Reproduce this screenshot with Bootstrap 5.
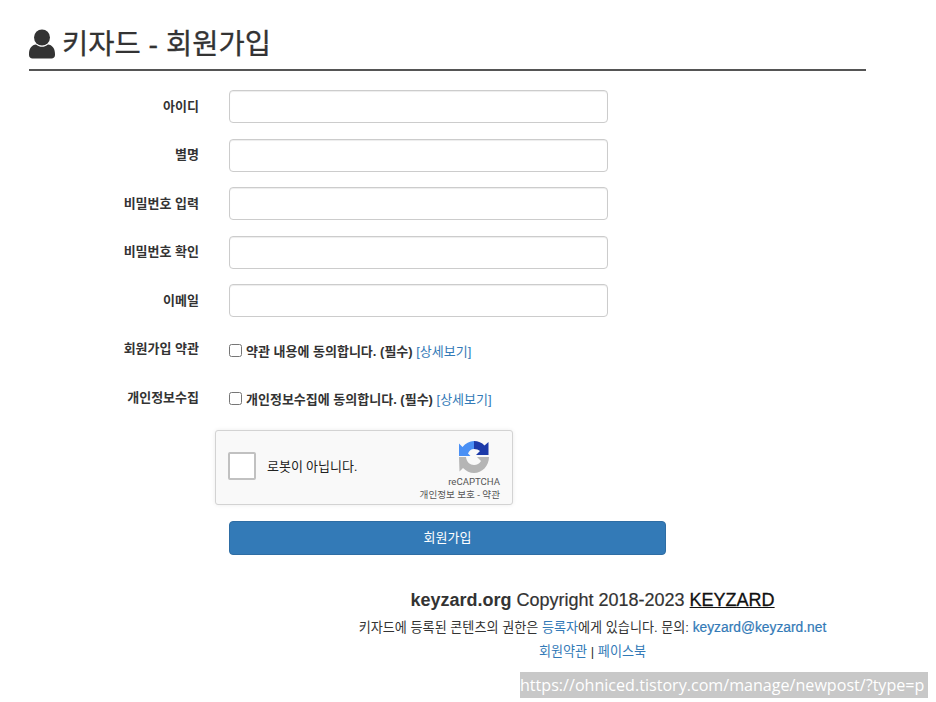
<!DOCTYPE html>
<html lang="ko">
<head>
    <meta charset="UTF-8">
    <meta name="viewport" content="width=device-width, initial-scale=1.0">
    <title>키자드 - 회원가입</title>
    <link href="https://cdn.jsdelivr.net/npm/bootstrap@5.3.3/dist/css/bootstrap.min.css" rel="stylesheet">
    <script src="https://cdn.jsdelivr.net/npm/bootstrap@5.3.3/dist/js/bootstrap.bundle.min.js"></script>
    <style>
        body {
            font-family: "Liberation Sans", "Noto Sans CJK KR", sans-serif;
            color: #333;
            font-size: 13px;
            background: #fff;
            overflow: hidden;
        }
        .page-wrap { width: 837px; margin-left: 29px; height: 702px; }
        .page-head {
            margin-top: 28px;
            border-bottom: 2px solid #555;
            font-size: 28.5px;
            line-height: 30px;
            gap: 5px;
            padding: 1px 0 10px;
            box-sizing: content-box;
            height: 30px;
            -webkit-text-stroke: .3px #333;
        }
        .head-icon { width: 28px; height: 30px; flex: none; }
        .form-area { margin-top: 19px; }
        .form-line { height: 33px; margin-bottom: 15.5px; gap: 30px; }
        .form-line label, .check-line .side-label {
            width: 170px;
            flex: none;
            text-align: right;
            font-weight: 700;
            color: #333;
            margin: 0;
        }
        .form-line .form-control {
            width: 379px;
            height: 33px;
            flex: none;
            border-color: #ccc;
            box-shadow: inset 0 1px 1px rgba(0, 0, 0, .075);
            border-radius: 4px;
        }
        .check-line { height: 33px; margin-bottom: 15.5px; gap: 30px; }
        .check-text { font-weight: 700; line-height: 17px; margin-top: 4px; }
        .check-text input { width: 13px; height: 13px; margin: 0 4px 0 0; vertical-align: -1px; }
        .check-text a, .page-foot a { color: #337ab7; text-decoration: none; }
        .check-text a { font-weight: 400; }
        .side-label { line-height: 17px; margin-top: -1px !important; }
        .captcha-box {
            width: 298px;
            height: 75px;
            margin-left: 186px;
            margin-top: 0;
            background: #f9f9f9;
            border: 1px solid #d3d3d3;
            border-radius: 3px;
            box-shadow: 0 0 4px rgba(0, 0, 0, .08);
            font-family: Roboto, "Noto Sans CJK KR", sans-serif;
        }
        .captcha-check {
            width: 28px;
            height: 28px;
            margin: 21px 0 0 12px;
            background: #fff;
            border: 2px solid #c1c1c1;
            border-radius: 2px;
            flex: none;
        }
        .captcha-label { font-size: 13px; color: #222; margin: 27px 0 0 11px; line-height: 17px; }
        .captcha-logo { left: 243px; top: 10px; width: 30px; height: 32px; }
        .captcha-side { right: 12px; top: 44px; text-align: right; color: #555; font-size: 9.6px; line-height: 13px; }
        .join-btn {
            display: block;
            width: 437px;
            height: 34px;
            margin: 16px 0 0 200px;
            background: #337ab7;
            border: 1px solid #2e6da4;
            border-radius: 4px;
            font-size: 13px;
            color: #fff;
            padding: 0;
        }
        .page-foot { margin: 34px 0 0 290px; text-align: center; }
        .foot-top { font-size: 18px; line-height: 22px; }
        .foot-top a { color: #111; text-decoration: underline; -webkit-text-stroke: .3px #111; }
        .foot-top span { -webkit-text-stroke: .2px #333; }
        .foot-line { font-size: 13.1px; line-height: 18px; margin-top: 8px; }
        .foot-line + .foot-line { margin-top: 6px; }
        .foot-mail { font-size: 13.8px; -webkit-text-stroke: .2px #337ab7; }
        .url-tag {
            position: absolute;
            left: 520px;
            top: 672px;
            width: 408px;
            height: 26px;
            background: #c8c8c8;
            color: #fff;
            font-family: "Open Sans", sans-serif;
            font-size: 16.1px;
            line-height: 26px;
            white-space: nowrap;
        }
    </style>
</head>
<body>
    <div class="page-wrap">
        <div class="page-head d-flex align-items-center">
            <svg class="head-icon" viewBox="0 0 28 30" fill="#333">
                <circle cx="13" cy="8.500" r="8"/>
                <path d="M0 25c0-6 3-9 7-9.500 2 1.500 4 2.300 6 2.300s4-.8 6-2.300c4 .5 7 3.500 7 9.500v1c0 2-1.500 3.500-3.500 3.500h-19C1.500 29.500 0 28 0 26z"/>
            </svg>
            <span>키자드 - 회원가입</span>
        </div>

        <form class="form-area">
            <div class="form-line d-flex align-items-center"><label for="uid">아이디</label><input id="uid" class="form-control" type="text"></div>
            <div class="form-line d-flex align-items-center"><label for="nick">별명</label><input id="nick" class="form-control" type="text"></div>
            <div class="form-line d-flex align-items-center"><label for="pw">비밀번호 입력</label><input id="pw" class="form-control" type="password"></div>
            <div class="form-line d-flex align-items-center"><label for="pw2">비밀번호 확인</label><input id="pw2" class="form-control" type="password"></div>
            <div class="form-line d-flex align-items-center"><label for="mail">이메일</label><input id="mail" class="form-control" type="text"></div>

            <div class="check-line d-flex align-items-center">
                <span class="side-label">회원가입 약관</span>
                <div class="check-text"><input type="checkbox">약관 내용에 동의합니다. (필수) <a href="#">[상세보기]</a></div>
            </div>
            <div class="check-line d-flex align-items-center">
                <span class="side-label">개인정보수집</span>
                <div class="check-text"><input type="checkbox">개인정보수집에 동의합니다. (필수) <a href="#">[상세보기]</a></div>
            </div>

            <div class="captcha-box d-flex position-relative">
                <div class="captcha-check"></div>
                <div class="captcha-label">로봇이 아닙니다.</div>
                <svg class="captcha-logo position-absolute" viewBox="0 0 30 32">
                    <path fill="#1c3aa9" d="M15 0C19 0 23 1.700 25.500 4.500L29.500 1V14H17L21 10C19.500 8.700 17.500 8 15 8Z"/>
                    <path fill="#4a90f5" d="M15 0V8C12 8 10 10 9 12.500L11.500 15H0V2.500L3.500 6C6.500 2.500 10.500 0 15 0Z"/>
                    <path fill="#b5b5b5" d="M0 16H7C7.500 21 11 24 15 24C18 24 20.500 22.500 22 20L18 16H30C30 25 23 32 15 32C11 32 7 30 4 27L.5 30.500Z"/>
                </svg>
                <div class="captcha-side position-absolute">reCAPTCHA<br>개인정보 보호 - 약관</div>
            </div>

            <button type="button" class="join-btn btn">회원가입</button>
        </form>

        <div class="page-foot">
            <div class="foot-top"><strong>keyzard.org</strong> <span>Copyright 2018-2023</span> <a href="#">KEYZARD</a></div>
            <div class="foot-line">키자드에 등록된 콘텐츠의 권한은 <a href="#">등록자</a>에게 있습니다. 문의: <a class="foot-mail" href="#">keyzard@keyzard.net</a></div>
            <div class="foot-line"><a href="#">회원약관</a> | <a href="#">페이스북</a></div>
        </div>
    </div>
    <div class="url-tag">https://ohniced.tistory.com/manage/newpost/?type=p</div>
</body>
</html>
